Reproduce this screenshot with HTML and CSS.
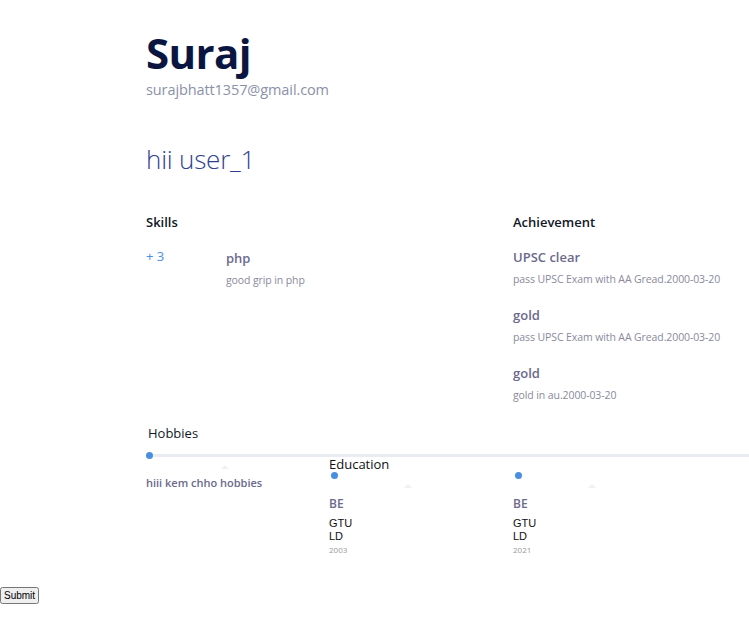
FILE: index.html
```html
<!DOCTYPE html>
<html>
<head>
<meta charset="utf-8">
<link rel="stylesheet" href="styles.css">
</head>
<body>
<main class="page">
  <header class="intro">
    <h1 class="name">Suraj</h1>
    <p class="email">surajbhatt1357@gmail.com</p>
  </header>
  <h2 class="greet">hii user_1</h2>

  <section class="two-col">
    <div class="col">
      <h3 class="sec-title">Skills</h3>
      <div class="skill">
        <span class="count">+ 3</span>
        <div class="skill-body">
          <div class="item-title">php</div>
          <div class="item-desc">good grip in php</div>
        </div>
      </div>
    </div>
    <div class="col">
      <h3 class="sec-title">Achievement</h3>
      <div class="ach">
        <div class="item-title">UPSC clear</div>
        <div class="item-desc">pass UPSC Exam with AA Gread.2000-03-20</div>
      </div>
      <div class="ach">
        <div class="item-title">gold</div>
        <div class="item-desc">pass UPSC Exam with AA Gread.2000-03-20</div>
      </div>
      <div class="ach">
        <div class="item-title">gold</div>
        <div class="item-desc">gold in au.2000-03-20</div>
      </div>
    </div>
  </section>

  <section class="hobbies">
    <h3 class="sec-title hob-title">Hobbies</h3>
    <div class="line"></div>
    <div class="tl-row">
      <div class="tl-col first">
        <span class="dot dot-line"></span>
        <span class="arrow"></span>
        <div class="hob-text">hiii kem chho hobbies</div>
      </div>
      <div class="tl-col">
        <div class="edu-label">Education</div>
        <span class="dot"></span>
        <span class="arrow"></span>
        <div class="deg">BE</div>
        <div class="uni">GTU<br>LD</div>
        <div class="year">2003</div>
      </div>
      <div class="tl-col">
        <div class="edu-label"></div>
        <span class="dot"></span>
        <span class="arrow"></span>
        <div class="deg">BE</div>
        <div class="uni">GTU<br>LD</div>
        <div class="year">2021</div>
      </div>
    </div>
  </section>
</main>
<button class="submit">Submit</button>
</body>
</html>
```
FILE: styles.css
```css
html, body { margin: 0; padding: 0; background: #fff; }
body { font-family: "Open Sans", "Noto Sans", sans-serif; }
.page { padding: 24px 0 0 146px; }
.intro { margin: 0; }
.name { margin: 0; font-size: 42px; font-weight: 700; color: #0b1640; line-height: 58px; letter-spacing: -0.6px; }
.email { margin: -2px 0 0; font-size: 14.5px; color: #8a91a8; line-height: 20px; letter-spacing: -0.1px; }
.greet { margin: 39px 0 0; font-size: 26px; font-weight: 300; color: #2f3f8f; line-height: 40px; letter-spacing: -0.2px; }
.two-col { display: grid; grid-template-columns: 367px 1fr; margin-top: 34px; }
.sec-title { margin: 0; font-size: 13px; font-weight: 600; color: #111827; line-height: 18px; }
.skill { display: flex; margin-top: 16px; }
.count { width: 80px; font-size: 13px; font-weight: 500; color: #4a90e2; line-height: 18px; }
.item-title { font-size: 13px; font-weight: 600; color: #6b6a8c; line-height: 18px; margin-top: 2px; }
.item-desc { font-size: 10.5px; color: #8a8a9c; line-height: 16px; margin-top: 5px; letter-spacing: -0.1px; }
.ach { margin-top: 17px; }
.ach + .ach { margin-top: 19px; }
.hobbies { margin-top: 21px; }
.hob-title { font-weight: 500; margin-left: 2px; }
.line { height: 3px; background: #e9edf3; margin-top: 12px; }
.tl-row { display: grid; grid-template-columns: 183px 184px 183px; }
.tl-col { position: relative; display: flex; flex-direction: column; align-items: flex-start; }
.dot { width: 7px; height: 7px; border-radius: 50%; background: #4a8ee0; margin: -1px 0 0 2px; }
.dot-line { margin-top: -5px; margin-left: 0; }
.arrow { margin: 5px 0 0 75px; width: 0; height: 0; border-left: 4px solid transparent; border-right: 4px solid transparent; border-bottom: 4px solid #f0f1f4; }
.first .arrow { margin-top: 6px; }
.first .hob-text { margin-top: 6px; }
.hob-text { font-size: 11px; font-weight: 600; color: #6b6a8c; line-height: 16px; }
.edu-label { font-size: 13px; color: #111; line-height: 18px; height: 18px; margin-top: -2px; }
.deg { margin-top: 8px; font-size: 12px; font-weight: 600; color: #6b6a8c; line-height: 16px; }
.uni { font-family: "Liberation Sans", Arial, sans-serif; font-size: 11px; color: #111; line-height: 13px; margin-top: 5px; }
.year { font-size: 8px; color: #999; line-height: 14px; }
.submit { margin-top: 30px; font-family: "Liberation Sans", Arial, sans-serif; font-size: 10px; padding: 1px 2px; }
```
